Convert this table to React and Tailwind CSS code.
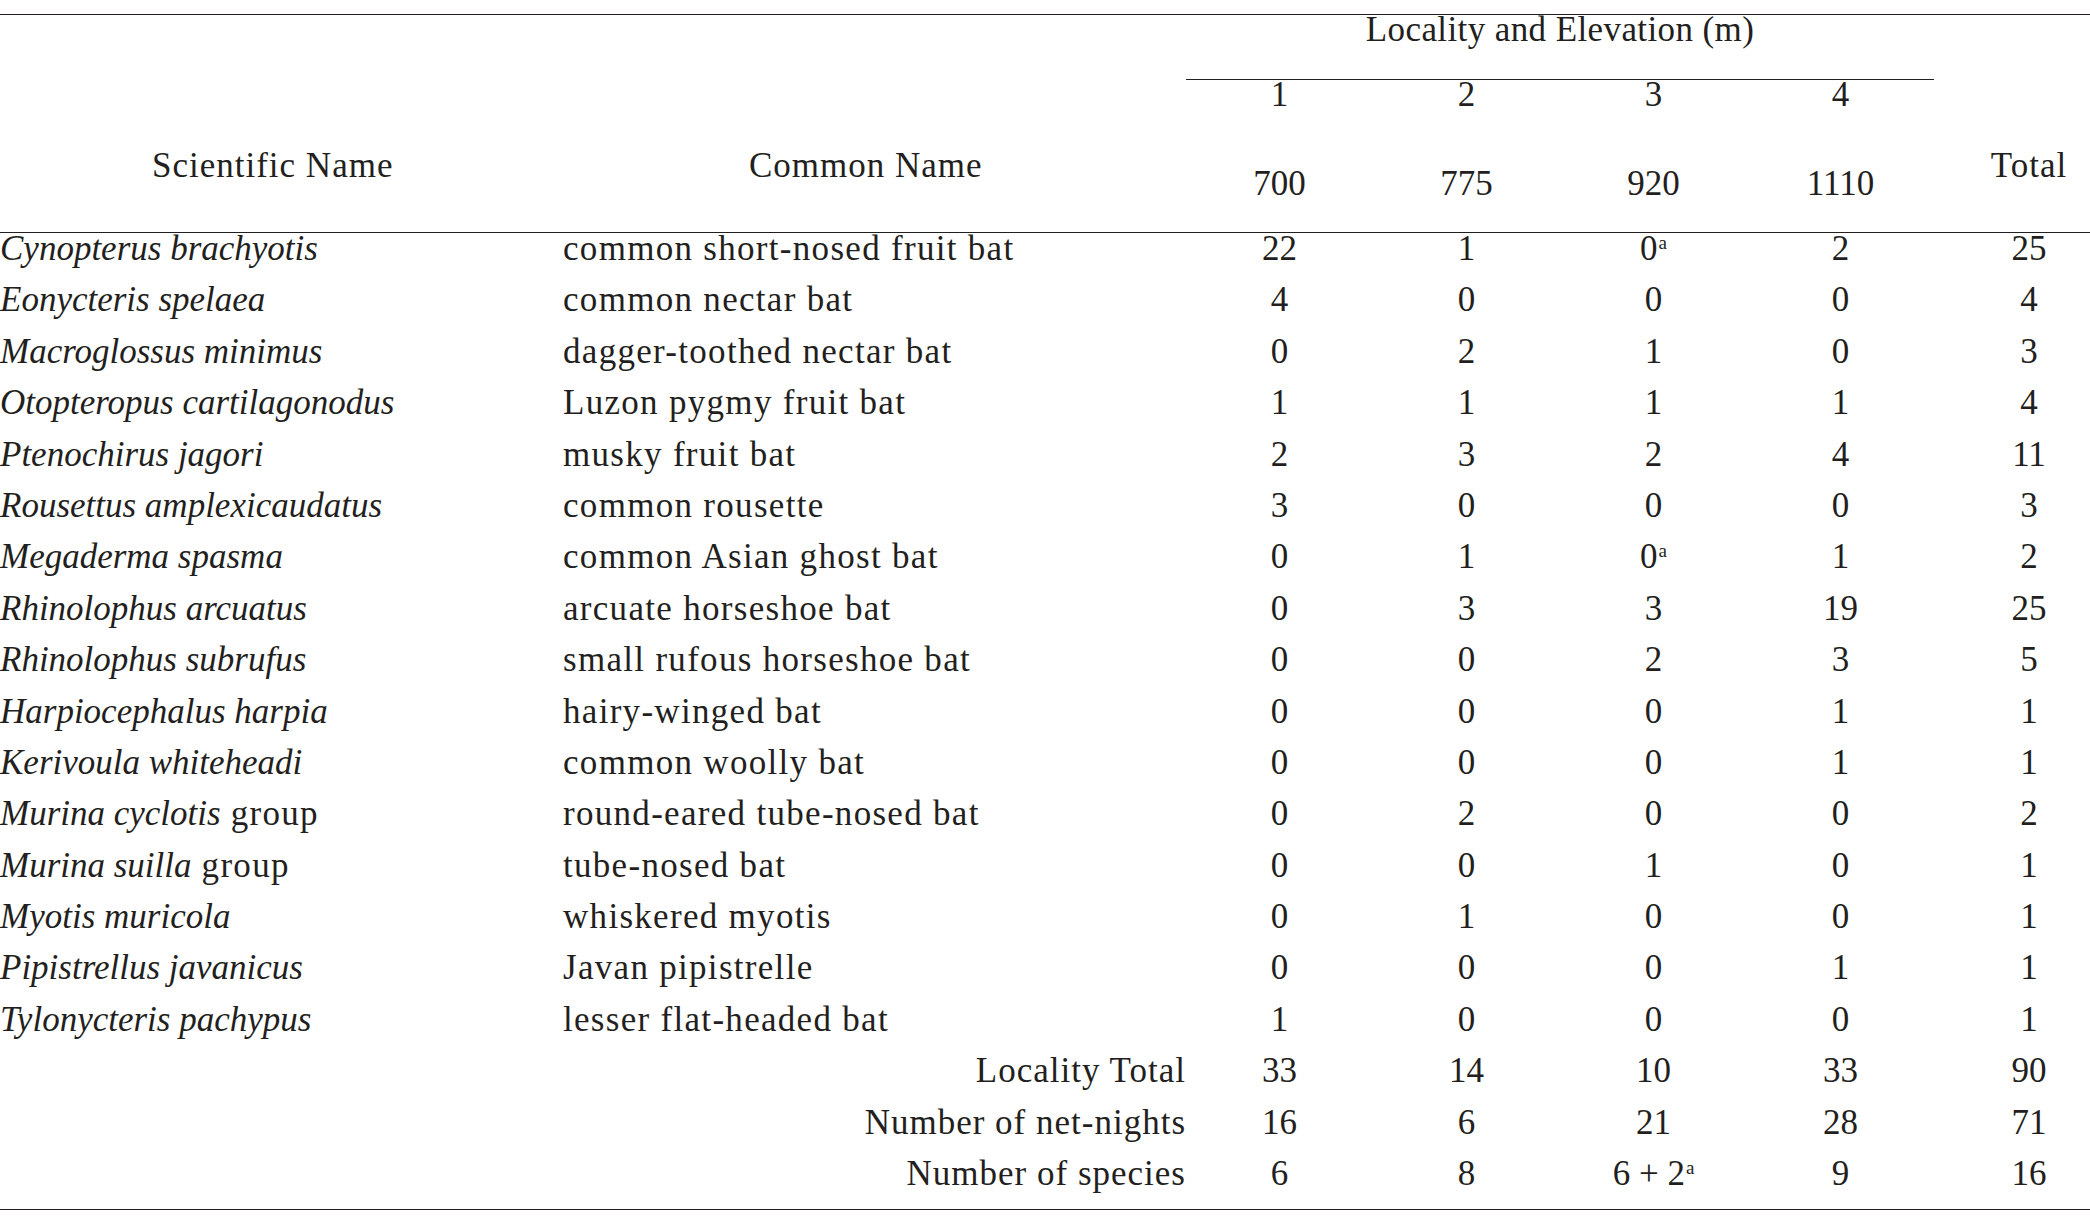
import React from 'react';

const rows = [
  ['Cynopterus brachyotis', null, 'common short-nosed fruit bat', ['22', '1', '0a', '2'], '25'],
  ['Eonycteris spelaea', null, 'common nectar bat', ['4', '0', '0', '0'], '4'],
  ['Macroglossus minimus', null, 'dagger-toothed nectar bat', ['0', '2', '1', '0'], '3'],
  ['Otopteropus cartilagonodus', null, 'Luzon pygmy fruit bat', ['1', '1', '1', '1'], '4'],
  ['Ptenochirus jagori', null, 'musky fruit bat', ['2', '3', '2', '4'], '11'],
  ['Rousettus amplexicaudatus', null, 'common rousette', ['3', '0', '0', '0'], '3'],
  ['Megaderma spasma', null, 'common Asian ghost bat', ['0', '1', '0a', '1'], '2'],
  ['Rhinolophus arcuatus', null, 'arcuate horseshoe bat', ['0', '3', '3', '19'], '25'],
  ['Rhinolophus subrufus', null, 'small rufous horseshoe bat', ['0', '0', '2', '3'], '5'],
  ['Harpiocephalus harpia', null, 'hairy-winged bat', ['0', '0', '0', '1'], '1'],
  ['Kerivoula whiteheadi', null, 'common woolly bat', ['0', '0', '0', '1'], '1'],
  ['Murina cyclotis', 'group', 'round-eared tube-nosed bat', ['0', '2', '0', '0'], '2'],
  ['Murina suilla', 'group', 'tube-nosed bat', ['0', '0', '1', '0'], '1'],
  ['Myotis muricola', null, 'whiskered myotis', ['0', '1', '0', '0'], '1'],
  ['Pipistrellus javanicus', null, 'Javan pipistrelle', ['0', '0', '0', '1'], '1'],
  ['Tylonycteris pachypus', null, 'lesser flat-headed bat', ['1', '0', '0', '0'], '1'],
];

const summary = [
  ['Locality Total', ['33', '14', '10', '33'], '90'],
  ['Number of net-nights', ['16', '6', '21', '28'], '71'],
  ['Number of species', ['6', '8', '6 + 2a', '9'], '16'],
];

// trailing "a" marks a footnote superscript
const Value = ({ v }) => {
  if (v.endsWith('a')) {
    return (
      <>
        {v.slice(0, -1)}
        <sup className="text-[19px] leading-none -top-[11px] ml-[1px]">a</sup>
      </>
    );
  }
  return v;
};

const cell = 'leading-[28px] pt-[2px] pb-[21.4px]';
const line = 'border-[#231f20]';

export default function App() {
  return (
    <div className="bg-white w-[2090px] h-[1216px] overflow-hidden text-[#231f20] font-['Liberation_Serif','Times_New_Roman',serif] text-[35px]">
      <table className="mt-[14px] w-[2090px] table-fixed border-separate border-spacing-0">
        <colgroup>
          <col className="w-[563px]" />
          <col className="w-[623px]" />
          <col className="w-[187px]" />
          <col className="w-[187px]" />
          <col className="w-[187px]" />
          <col className="w-[187px]" />
          <col className="w-[156px]" />
        </colgroup>
        <thead>
          <tr>
            <th rowSpan={3} className={`font-normal text-left align-bottom leading-[28px] pl-[152px] pb-[52px] tracking-[1px] border-t border-b ${line}`}>
              Scientific Name
            </th>
            <th rowSpan={3} className={`font-normal text-left align-bottom leading-[28px] pl-[186px] pb-[52px] tracking-[1px] border-t border-b ${line}`}>
              Common Name
            </th>
            <th colSpan={4} className={`font-normal text-center leading-[28px] pt-[1px] pb-[35px] tracking-[0.4px] border-t border-b ${line}`}>
              Locality and Elevation (m)
            </th>
            <th rowSpan={3} className={`font-normal text-center align-bottom leading-[28px] pl-[34px] pb-[52px] tracking-[1px] border-t border-b ${line}`}>
              Total
            </th>
          </tr>
          <tr>
            {['1', '2', '3', '4'].map((n) => (
              <th key={n} className="font-normal text-center leading-[28px] pt-[1px] pb-0">
                {n}
              </th>
            ))}
          </tr>
          <tr>
            {['700', '775', '920', '1110'].map((n) => (
              <th key={n} className={`font-normal text-center leading-[28px] pt-[61px] pb-[34px] border-b ${line}`}>
                {n}
              </th>
            ))}
          </tr>
        </thead>
        <tbody>
          {rows.map(([sci, extra, common, counts, total]) => (
            <tr key={sci}>
              <td className={`${cell} whitespace-nowrap`}>
                <i>{sci}</i>
                {extra && <span className="tracking-[1.3px]"> {extra}</span>}
              </td>
              <td className={`${cell} whitespace-nowrap tracking-[1.3px]`}>{common}</td>
              {counts.map((c, i) => (
                <td key={i} className={`${cell} text-center`}>
                  <Value v={c} />
                </td>
              ))}
              <td className={`${cell} text-center pl-[34px]`}>{total}</td>
            </tr>
          ))}
          {summary.map(([label, counts, total], r) => {
            const last = r === summary.length - 1 ? `border-b ${line}` : '';
            return (
              <tr key={label}>
                <td colSpan={2} className={`${cell} ${last} text-right tracking-[1px] whitespace-nowrap`}>
                  {label}
                </td>
                {counts.map((c, i) => (
                  <td key={i} className={`${cell} ${last} text-center whitespace-nowrap`}>
                    <Value v={c} />
                  </td>
                ))}
                <td className={`${cell} ${last} text-center pl-[34px]`}>{total}</td>
              </tr>
            );
          })}
        </tbody>
      </table>
    </div>
  );
}
